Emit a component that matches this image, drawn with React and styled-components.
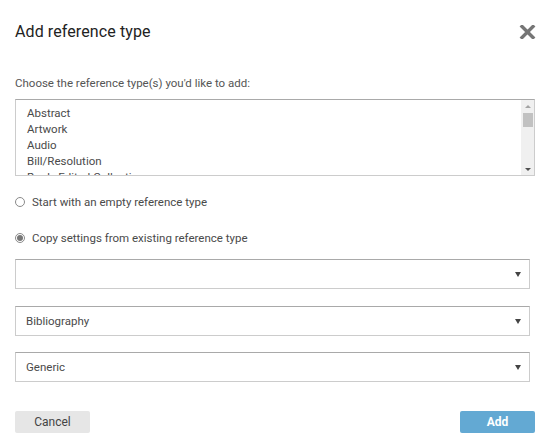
import React, { useState } from 'react';
import styled, { createGlobalStyle } from 'styled-components';

//STYLE
const Global = createGlobalStyle`
  html, body { margin: 0; padding: 0; background: #fff; }
  body { font-family: Roboto, "Liberation Sans", Arial, sans-serif; }
`;

const Dialog = styled.div`width: 550px; height: 448px; box-sizing: border-box; padding: 0 15px; display: flex; flex-direction: column; color: #444;`;
const Header = styled.div`display: flex; justify-content: space-between; align-items: center; height: 64px;`;
const Title = styled.h2`margin: 0; font-size: 16px; font-weight: 400; color: #222; line-height: 20px; letter-spacing: 0.1px;`;
const Close = styled.button`border: 0; background: none; padding: 0; margin-right: -1px; width: 18px; height: 16px; display: flex; align-items: center; justify-content: center; cursor: pointer;`;
const Label = styled.div`font-size: 11.5px; color: #555; margin-top: 11px; line-height: 16px;`;
const ListBox = styled.div`margin-top: 8px; height: 77px; box-sizing: border-box; border: 1px solid #ccc; border-top-color: #a9a9a9; display: flex; overflow: hidden;`;
const Items = styled.ul`flex: 1; margin: 0; padding: 5px 11px; list-style: none;`;
const Item = styled.li`font-size: 11.5px; line-height: 16px; color: #4a4a4a; white-space: nowrap;`;
const ScrollBar = styled.div`width: 13px; background: #f0f0f0; display: flex; flex-direction: column; align-items: center; justify-content: space-between; padding: 5px 0 4px; box-sizing: border-box;`;
const Thumb = styled.div`width: 10px; height: 14px; background: #c1c1c1; margin-top: 5px; margin-bottom: auto;`;
const Tri = styled.div`width: 0; height: 0; border-left: 3px solid transparent; border-right: 3px solid transparent; ${p => p.up ? 'border-bottom: 3px solid #a3a3a3;' : 'border-top: 3px solid #505050;'}`;
const RadioRow = styled.label`display: flex; align-items: center; gap: 7px; font-size: 11.5px; color: #4a4a4a; line-height: 16px; margin-top: ${p => p.first ? '18px' : '20px'}; cursor: pointer;`;
const Dot = styled.span`width: 10px; height: 10px; border-radius: 50%; box-sizing: border-box; border: 1px solid #8a8a8a; background: #fff; display: inline-flex; align-items: center; justify-content: center;
  &::after { content: ''; width: 6px; height: 6px; border-radius: 50%; background: ${p => p.checked ? '#777' : 'transparent'}; }`;
const Select = styled.div`margin-top: ${p => p.gap}px; height: 30px; width: 515px; box-sizing: border-box; border: 1px solid #ccc; border-top-color: #a9a9a9; display: flex; align-items: center; justify-content: space-between; padding: 0 8px 0 10px; font-size: 11.5px; color: #4a4a4a;`;
const Arrow = styled.span`width: 0; height: 0; border-left: 3.5px solid transparent; border-right: 3.5px solid transparent; border-top: 5px solid #444;`;
const Footer = styled.div`display: flex; justify-content: space-between; margin-top: 29px;`;
const Button = styled.button`width: 75px; height: 22px; border: 0; border-radius: 2px; font-family: inherit; font-size: 12px; cursor: pointer;
  background: ${p => p.primary ? '#63a9d3' : '#e6e6e6'}; color: ${p => p.primary ? '#fff' : '#444'}; font-weight: ${p => p.primary ? 700 : 400};`;

const types = ['Abstract', 'Artwork', 'Audio', 'Bill/Resolution', 'Book, Edited Collection'];

function App() {
  const [mode, setMode] = useState('copy');

  return (
    <Dialog>
      <Global />
      <Header>
        <Title>Add reference type</Title>
        <Close aria-label="close">
          <svg width="17" height="14" viewBox="0 0 17 14">
            <path d="M3 1.5 L14 12.5 M14 1.5 L3 12.5" stroke="#767676" strokeWidth="3.4" strokeLinecap="square" />
          </svg>
        </Close>
      </Header>
      <Label>Choose the reference type(s) you'd like to add:</Label>
      <ListBox>
        <Items>
          {types.map(t => <Item key={t}>{t}</Item>)}
        </Items>
        <ScrollBar>
          <Tri up />
          <Thumb />
          <Tri />
        </ScrollBar>
      </ListBox>
      <RadioRow first onClick={() => setMode('empty')}>
        <Dot checked={mode === 'empty'} />Start with an empty reference type
      </RadioRow>
      <RadioRow onClick={() => setMode('copy')}>
        <Dot checked={mode === 'copy'} />Copy settings from existing reference type
      </RadioRow>
      <Select gap={13}><span></span><Arrow /></Select>
      <Select gap={17}><span>Bibliography</span><Arrow /></Select>
      <Select gap={16}><span>Generic</span><Arrow /></Select>
      <Footer>
        <Button>Cancel</Button>
        <Button primary>Add</Button>
      </Footer>
    </Dialog>
  );
}

export default App;
